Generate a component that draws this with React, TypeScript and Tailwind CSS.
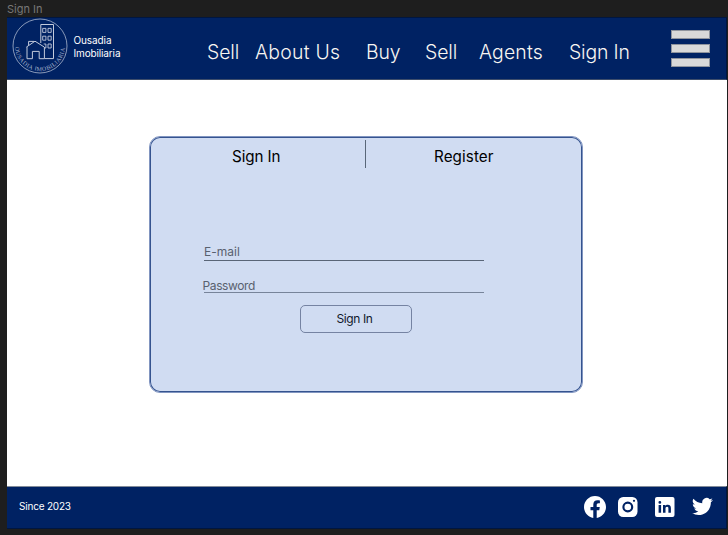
import React from "react";

function Logo() {
  return (
    <svg className="block h-[56px] w-[56px] shrink-0" viewBox="12 18 56 56" fill="none" stroke="#c3cbdc">
      <circle cx="40" cy="46" r="27" strokeWidth="0.7" />
      <path d="M40.8 43V24.5H53.5V58.6H44.6" strokeWidth="1" />
      <path
        d="M42.7 28.4h3.2v4h-3.2zM48 28.4h3.2v4H48zM42.7 36.2h3.2v4h-3.2zM48 36.2h3.2v4H48zM43.7 44h2.2v4h-1.4M48 44h3.2v4H48z"
        strokeWidth="0.9"
      />
      <path d="M26.5 47L35 41.2L44.2 47M28.6 45.4V41.4H34M27 46.8V58.7H32.4V51.4H39.2V58.7H44.4V47" strokeWidth="1" />
      <path id="seal" d="M15 46A25 25 0 0 0 65 46" stroke="none" />
      <text fill="#a9b4cd" stroke="none" fontSize="6" fontFamily="Liberation Serif, serif">
        <textPath href="#seal" startOffset="1" textLength="75">
          OUSADIA IMOBILIARIA
        </textPath>
      </text>
    </svg>
  );
}

function Header() {
  return (
    <header className="flex h-[63px] shrink-0 border-t border-r border-b border-t-[#001640] border-r-[#001640] border-b-[#3d4d6b] bg-[#002263] text-white">
      <div className="flex w-[200px] pl-[5px]">
        <Logo />
        <p className="ml-[5.5px] pt-[16px] text-[10px] leading-[13px]">
          <span className="block tracking-[-0.1px]">Ousadia</span>
          <span className="block tracking-[-0.14px]">Imobiliaria</span>
        </p>
      </div>
      <nav className="flex w-[464px] pt-[22px] text-[19.4px] leading-6 font-[350] whitespace-nowrap text-[#f8f6f2]">
        <a className="w-[48px] tracking-[-0.1px]">Sell</a>
        <a className="w-[111px] tracking-[0.25px]">About Us</a>
        <a className="w-[59px] tracking-[-0.1px]">Buy</a>
        <a className="w-[54px] tracking-[-0.1px]">Sell</a>
        <a className="w-[90px] tracking-[0.15px]">Agents</a>
        <a className="tracking-[-0.15px]">Sign In</a>
      </nav>
      <div className="flex flex-col gap-[5px] pt-[12px]">
        <span className="h-[9px] w-[39px] border border-[#8f949e] bg-[#d9d9d9]" />
        <span className="h-[9px] w-[39px] border border-[#8f949e] bg-[#d9d9d9]" />
        <span className="h-[9px] w-[39px] border border-[#8f949e] bg-[#d9d9d9]" />
      </div>
    </header>
  );
}

function SignInCard() {
  return (
    <section className="mt-[56px] ml-[142px] h-[257px] w-[434px] rounded-[11px] border border-[#8195c0] bg-[#d0dcf2] p-px text-black shadow-[inset_0_0_0_1px_#35538f]">
      <div className="flex h-[30px] text-[15.2px] leading-5">
        <div className="mt-[2px] w-[215px] border-r border-[#596779] pt-[7px] pl-[81px] tracking-[-0.1px]">Sign In</div>
        <div className="pt-[9px] pl-[68px] tracking-[0.1px]">Register</div>
      </div>
      <form className="pt-[76px] pl-[53px] text-[12px] text-[#59616f]">
        <div className="h-[17px] w-[280px] border-b border-[#596577] leading-[16px]">E-mail</div>
        <div className="mt-[17px] h-[15px] w-[280px] border-b border-[#77849a] leading-[15px]">
          <span className="-ml-[1.5px] tracking-[-0.38px]">Password</span>
        </div>
        <button
          type="button"
          className="mt-[12px] ml-[96px] block h-[28px] w-[112px] rounded-[5px] border border-[#7583a2] pr-[3px] text-[12px] tracking-[-0.4px] text-[#10182c]"
        >
          Sign In
        </button>
      </form>
    </section>
  );
}

function Footer() {
  return (
    <footer className="flex h-[43px] shrink-0 border-t border-r border-b border-t-[#828b99] border-r-[#001640] border-b-[#001640] bg-[#002263] text-white">
      <p className="w-[577px] pt-[12px] pl-[12px] text-[10px] leading-[14px] tracking-[-0.2px]">Since 2023</p>
      <div className="flex pt-[9px]">
        <svg className="h-[22px] w-[22px]" viewBox="0 0 24 24" fill="white">
          <path d="M24 12.07C24 5.4 18.63 0 12 0S0 5.4 0 12.07C0 18.1 4.39 23.1 10.13 24v-8.44H7.08v-3.49h3.05V9.41c0-3.02 1.79-4.69 4.53-4.69 1.31 0 2.68.24 2.68.24v2.97h-1.51c-1.49 0-1.96.93-1.96 1.89v2.25h3.33l-.53 3.49h-2.8V24C19.61 23.1 24 18.1 24 12.07z" />
        </svg>
        <svg className="mt-px ml-[12px] h-[20px] w-[20px]" viewBox="0 0 20 20">
          <rect width="19.5" height="20" rx="5.2" fill="white" />
          <circle cx="9.8" cy="10" r="4.4" fill="none" stroke="#002263" strokeWidth="2.1" />
          <circle cx="16" cy="3.8" r="1.1" fill="#002263" />
        </svg>
        <svg className="mt-px ml-[17px] h-[20px] w-[20px]" viewBox="0 0 20 20">
          <rect width="19.5" height="20" rx="2" fill="white" />
          <path
            fill="#002263"
            d="M3.6 8h2.5v7.7H3.6zM4.85 4a1.4 1.4 0 1 1 0 2.8 1.4 1.4 0 0 1 0-2.8zM8 8h2.4v1c.4-.7 1.2-1.2 2.3-1.2 2.5 0 3.2 1.4 3.2 3.5v4.4h-2.5v-4c0-1-.1-1.9-1.3-1.9s-1.6.9-1.6 1.9v4H8z"
          />
        </svg>
        <svg className="ml-[17px] h-[21px] w-[21px]" viewBox="0 0 24 24" fill="white">
          <path d="M23.95 4.57a10 10 0 0 1-2.82.78 4.96 4.96 0 0 0 2.16-2.73c-.95.56-2 .96-3.13 1.19a4.92 4.92 0 0 0-8.38 4.48C7.69 8.1 4.07 6.13 1.64 3.16a4.93 4.93 0 0 0 1.52 6.57 4.9 4.9 0 0 1-2.23-.61v.06a4.93 4.93 0 0 0 3.95 4.83 5 5 0 0 1-2.21.08 4.94 4.94 0 0 0 4.6 3.42A9.87 9.87 0 0 1 0 19.54a13.99 13.99 0 0 0 7.56 2.21c9.05 0 14-7.5 14-13.98 0-.21 0-.42-.02-.63a9.94 9.94 0 0 0 2.46-2.55z" />
        </svg>
      </div>
    </footer>
  );
}

export default function App() {
  return (
    <div className="flex h-[535px] w-[728px] flex-col overflow-hidden bg-[#1e1e1e] pl-[7px] font-[Inter,sans-serif]">
      <div className="h-[17px] shrink-0 pt-[2px] text-[11px] leading-[14px] tracking-[0px] text-[#777777]">Sign In</div>
      <main className="flex h-[512px] w-[720px] flex-col bg-white">
        <Header />
        <div className="grow">
          <SignInCard />
        </div>
        <Footer />
      </main>
    </div>
  );
}
